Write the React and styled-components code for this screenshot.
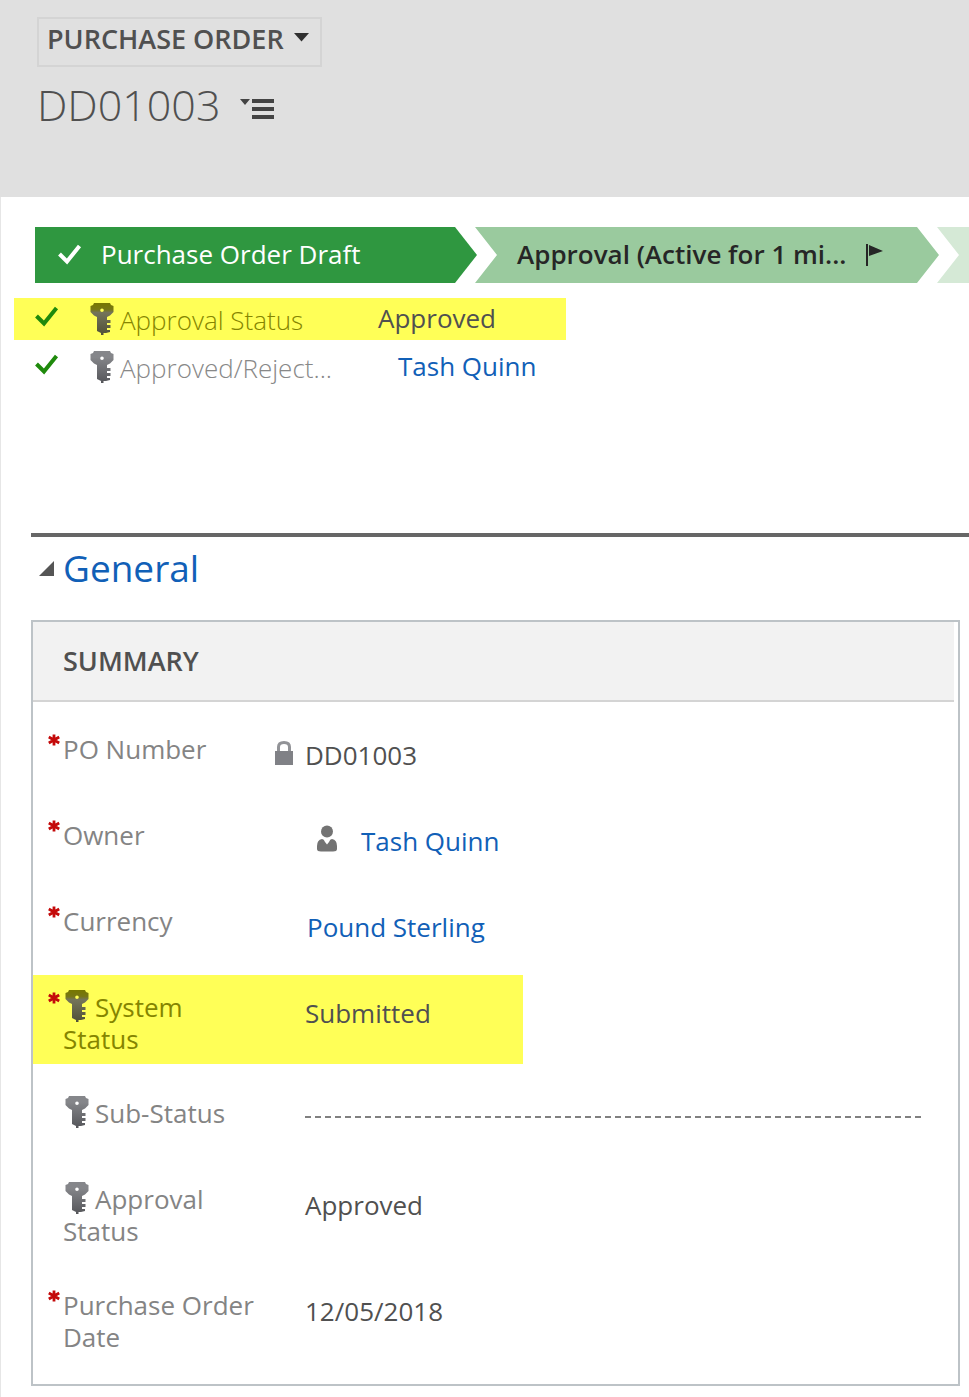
import React, { useState } from 'react';
import styled, { createGlobalStyle } from 'styled-components';

const GlobalStyle = createGlobalStyle`
  * {
    box-sizing: border-box;
  }
  body {
    margin: 0;
    background: #fff;
    color: #505050;
    font-family: "Open Sans", "Noto Sans", sans-serif;
    font-size: 26px;
    line-height: 32px;
  }
`;

const Header = styled.header`
  background: #e0e0e0;
  min-height: 197px;
  padding: 17px 37px;
`;

const EntityButton = styled.button`
  display: flex;
  align-items: flex-start;
  gap: 10px;
  height: 50px;
  padding: 4px 11px 0 8px;
  border: 2px solid #d4d4d4;
  background: none;
  color: #505050;
  font: inherit;
  font-size: 27px;
  font-weight: 600;
  cursor: pointer;

  svg {
    margin-top: 10px;
  }
`;

const TitleRow = styled.div`
  display: flex;
  align-items: center;
  gap: 20px;
  margin-top: 8px;
`;

const Title = styled.h1`
  margin: 0;
  font-size: 43px;
  font-weight: 300;
  line-height: 60px;
`;

const IconButton = styled.button`
  display: flex;
  padding: 8px 0 0;
  border: 0;
  background: none;
  cursor: pointer;
`;

const Main = styled.main`
  border-left: 1px solid #e6e6e6;
  padding: 30px 0 11px;
`;

const Stages = styled.ol`
  display: grid;
  grid-template-columns: 440fr 462fr 32fr;
  height: 56px;
  margin: 0 0 0 34px;
  padding: 0;
  list-style: none;
`;

const Stage = styled.li`
  display: flex;
  align-items: center;
  min-width: 0;
  margin-right: ${({ $last }) => ($last ? '0' : '-2px')};
  padding-left: ${({ $first, $last }) => ($last ? '0' : $first ? '23px' : '42px')};
  background: ${({ $bg }) => $bg};
  color: ${({ $first }) => ($first ? '#fff' : '#262626')};
  font-weight: ${({ $first }) => ($first ? 400 : 600)};
  clip-path: polygon(
    0 0,
    ${({ $last }) => ($last ? '100% 0' : 'calc(100% - 22px) 0')},
    100% 50%,
    ${({ $last }) => ($last ? '100% 100%' : 'calc(100% - 22px) 100%')},
    0 100%,
    ${({ $first }) => ($first ? '0 50%' : '22px 50%')}
  );

  svg {
    flex: none;
  }
`;

const StageName = styled.span`
  margin: ${({ $first }) => ($first ? '0 0 2px 19px' : '0 20px 2px 0')};
  white-space: nowrap;
`;

const Steps = styled.dl`
  min-height: 250px;
  margin: 0;
  padding: 15px 0 0 13px;
`;

const Step = styled.div`
  display: grid;
  grid-template-columns: 55px 30px 258px 1fr;
  align-items: start;
  width: 552px;
  max-width: 100%;
  height: 42px;
  margin-bottom: 6px;
  padding: 5px 0 0 21px;
  background: ${({ $marked }) => ($marked ? '#ffff57' : 'none')};

  > svg:first-child {
    margin-top: 3px;
  }
`;

const StepLabel = styled.dt`
  padding-top: 1px;
  color: ${({ $marked }) => ($marked ? '#858500' : '#888')};
  font-weight: 300;
  white-space: nowrap;
`;

const StepValue = styled.dd`
  margin: 0;
  padding-left: ${({ $lookup }) => ($lookup ? '20px' : '0')};
  line-height: 30px;
`;

const Link = styled.a`
  color: #1160b7;
  text-decoration: none;

  &:hover {
    text-decoration: underline;
  }
`;

const Section = styled.section`
  margin-left: 30px;
  border-top: 4px solid #666;
`;

const SectionTitle = styled.h2`
  margin: 0;
  font-size: 37px;
  font-weight: 400;
  line-height: 62px;

  button {
    display: flex;
    align-items: center;
    gap: 9px;
    padding: 0 0 0 8px;
    border: 0;
    background: none;
    color: #1160b7;
    font: inherit;
    cursor: pointer;
  }
`;

const Panel = styled.div`
  margin: 21px 9px 0 0;
  padding-bottom: 5px;
  border: 2px solid #bdc3c7;
`;

const PanelTitle = styled.h3`
  margin: 0 4px 15px 0;
  padding: 23px 30px;
  border-bottom: 2px solid #d4d4d4;
  background: #f2f2f2;
  font-size: 27px;
  font-weight: 600;
`;

const Fields = styled.dl`
  margin: 0;
`;

const Field = styled.div`
  display: grid;
  grid-template-columns: 15px 194px 18px 30px 1fr;
  width: ${({ $marked }) => ($marked ? '490px' : 'auto')};
  max-width: 100%;
  min-height: 69px;
  margin-bottom: 17px;
  padding: 16px 33px 9px 15px;
  background: ${({ $marked }) => ($marked ? '#ffff57' : 'none')};
`;

const FieldLabel = styled.dt`
  grid-column: 2;
  grid-row: 1;
  color: ${({ $marked }) => ($marked ? '#858500' : '#848484')};
`;

const Required = styled.svg`
  grid-column: 1;
  grid-row: 1;
  margin-top: 1px;
`;

const LockCell = styled.span`
  grid-column: 4;
  grid-row: 1;
  padding-top: 6px;
`;

const FieldValue = styled.dd`
  grid-column: 5;
  grid-row: 1;
  display: flex;
  margin: 0;
  padding: 6px 0 0 ${({ $lookup }) => ($lookup ? '2px' : '0')};
`;

const UserCell = styled.span`
  width: 54px;
  padding-left: 9px;
`;

const EmptyValue = styled.span`
  flex: 1;
  height: 15px;
  background: repeating-linear-gradient(90deg, #808080 0 6px, transparent 6px 10px) bottom / 100% 2px no-repeat;
`;

const KeySvg = styled.svg`
  ${({ $inline }) => ($inline ? 'margin: -4px 6px -4px 2px; vertical-align: -1px;' : '')}
`;

const KeyIcon = ({ marked, inline, id }) => (
  <KeySvg $inline={inline} width="24" height="32" viewBox="0 0 24 32" aria-hidden="true">
    <defs>
      <linearGradient id={id} x1="0" y1="0" x2="0" y2="1">
        <stop offset="0" stopColor={marked ? '#777700' : '#85868a'} />
        <stop offset=".2" stopColor={marked ? '#777714' : '#85868a'} />
        <stop offset=".3" stopColor={marked ? '#74745a' : '#7e7f83'} />
        <stop offset="1" stopColor={marked ? '#505038' : '#55565a'} />
      </linearGradient>
    </defs>
    <path
      fill={`url(#${id})`}
      fillRule="evenodd"
      d="M4 0H20L21 2L23.500 3V9L20 12.500L17 14V17H20.500V20H17V22H20.500V25H17V27H20V29L16 30H13.500V32H11V30L7 28V14L4 12.500L0.500 9V3L3 2ZM12 5.500A1.800 1.800 0 1 0 12 9.100A1.800 1.800 0 1 0 12 5.500Z"
    />
  </KeySvg>
);

const CheckIcon = ({ color }) => (
  <svg width="24" height="22" viewBox="0 0 24 22" aria-hidden="true">
    <path d="M1.500 10L9 17.500L21.500 2" fill="none" stroke={color} strokeWidth="4" />
  </svg>
);

const RequiredMark = () => (
  <Required width="12" height="12" viewBox="0 0 12 12" role="img" aria-label="Required">
    <path d="M6 0.500V11.500M0.800 3L11.200 9M0.800 9L11.200 3" stroke="#c40a0a" strokeWidth="2.800" />
  </Required>
);

const LockIcon = () => (
  <svg width="18" height="24" viewBox="0 0 18 24" aria-hidden="true">
    <path d="M3.500 11V6Q3.500 1.500 9 1.500T14.500 6V11" fill="none" stroke="#929397" strokeWidth="3" />
    <path d="M0 10H18V24H0Z" fill="#808186" />
  </svg>
);

const UserIcon = () => (
  <svg width="22" height="27" viewBox="0 0 22 27" aria-hidden="true">
    <circle cx="11" cy="6.500" r="6" fill="#737373" />
    <path d="M6 14Q8 14 9 17L11 19.500L13 17Q14 14 16 14Q21 15 21 21V24Q21 26.500 17 26.500H5Q1 26.500 1 24V21Q1 15 6 14Z" fill="#737373" />
  </svg>
);

const fields = [
  { label: 'PO Number', value: 'DD01003', required: true, locked: true },
  { label: 'Owner', value: 'Tash Quinn', required: true, link: true, user: true },
  { label: 'Currency', value: 'Pound Sterling', required: true, link: true },
  { label: 'System Status', value: 'Submitted', required: true, secured: true, marked: true },
  { label: 'Sub-Status', value: '', secured: true },
  { label: 'Approval Status', value: 'Approved', secured: true },
  { label: 'Purchase Order Date', value: '12/05/2018', required: true },
];

const FieldRow = ({ item, id }) => (
  <Field $marked={item.marked}>
    <FieldLabel $marked={item.marked}>
      {item.secured && <KeyIcon inline marked={item.marked} id={id} />}
      {item.label}
    </FieldLabel>
    {item.required && <RequiredMark />}
    {item.locked && <LockCell><LockIcon /></LockCell>}
    <FieldValue $lookup={item.link}>
      {item.user && <UserCell><UserIcon /></UserCell>}
      {item.link ? <Link href="#">{item.value}</Link> : item.value || <EmptyValue />}
    </FieldValue>
  </Field>
);

const App = () => {
  const [open, setOpen] = useState(true);

  return (
    <>
      <GlobalStyle />
      <Header>
        <EntityButton type="button">
          PURCHASE ORDER
          <svg width="15" height="9" viewBox="0 0 15 9" aria-hidden="true">
            <path d="M0 0H15L7.500 8.500Z" fill="#303030" />
          </svg>
        </EntityButton>
        <TitleRow>
          <Title>DD01003</Title>
          <IconButton type="button" aria-label="Record menu">
            <svg width="34" height="20" viewBox="0 0 34 20">
              <path d="M0 0H10L5 6ZM12 0H34V4H12ZM12 8H34V12H12ZM12 16H34V20H12Z" fill="#444" />
            </svg>
          </IconButton>
        </TitleRow>
      </Header>
      <Main>
        <Stages>
          <Stage $first $bg="#2f9740">
            <CheckIcon color="#fff" />
            <StageName $first>Purchase Order Draft</StageName>
          </Stage>
          <Stage $bg="#9aca9e">
            <StageName>Approval (Active for 1 mi...</StageName>
            <svg width="17" height="22" viewBox="0 0 17 22" aria-hidden="true">
              <path d="M0 0H2V22H0ZM3 1L17 7L3 12Z" fill="#262626" />
            </svg>
          </Stage>
          <Stage $last $bg="#d5e9d6" />
        </Stages>
        <Steps>
          <Step $marked>
            <CheckIcon color="#1f8a0c" />
            <KeyIcon marked id="key-status" />
            <StepLabel $marked>Approval Status</StepLabel>
            <StepValue>Approved</StepValue>
          </Step>
          <Step>
            <CheckIcon color="#1f8a0c" />
            <KeyIcon id="key-approver" />
            <StepLabel>Approved/Reject...</StepLabel>
            <StepValue $lookup><Link href="#">Tash Quinn</Link></StepValue>
          </Step>
        </Steps>
        <Section>
          <SectionTitle>
            <button type="button" aria-expanded={open} onClick={() => setOpen(!open)}>
              <svg width="15" height="15" viewBox="0 0 15 15" aria-hidden="true">
                <path d={open ? 'M15 0V15H0Z' : 'M3 0L12 7.500L3 15Z'} fill="#555" />
              </svg>
              General
            </button>
          </SectionTitle>
          {open && (
            <Panel>
              <PanelTitle>SUMMARY</PanelTitle>
              <Fields>
                {fields.map((item, index) => (
                  <FieldRow item={item} id={`key-${index}`} key={item.label} />
                ))}
              </Fields>
            </Panel>
          )}
        </Section>
      </Main>
    </>
  );
};

export default App;
